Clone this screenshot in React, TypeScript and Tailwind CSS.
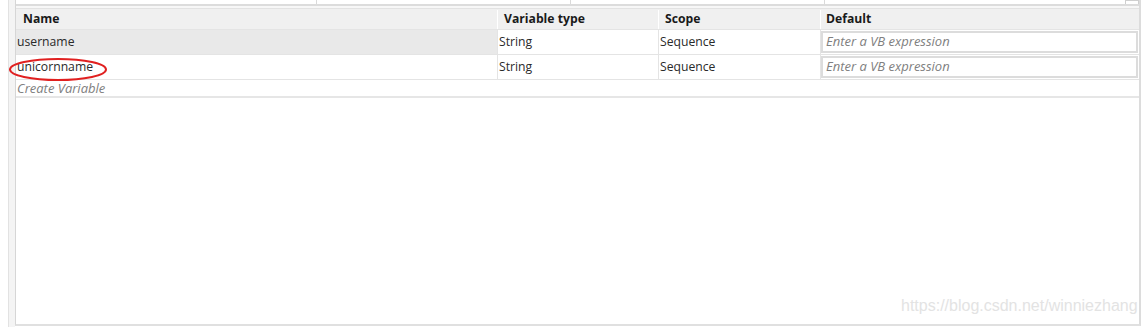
const font = { fontFamily: '"Open Sans", "Noto Sans", sans-serif' };

const rows = [
  { name: "username", type: "String", scope: "Sequence", selected: true },
  { name: "unicornname", type: "String", scope: "Sequence", selected: false },
];

function DefaultInput() {
  return (
    <div className="flex-1 h-full py-[1px] pr-[1px]">
      <div className="h-full border-2 border-[#dcdcdc] bg-white flex items-center pl-[3px] text-[13px] italic text-[#808080]">
        Enter a VB expression
      </div>
    </div>
  );
}

export default function App() {
  return (
    <div className="relative w-[1144px] h-[327px] bg-white flex overflow-hidden" style={font}>
      {/* left gutter */}
      <div className="w-[8px] shrink-0 bg-white" />
      <div className="w-[7px] shrink-0 bg-[#f4f4f4] border-l border-[#e2e2e2]" />

      {/* variables panel */}
      <div className="w-[1126px] shrink-0 flex flex-col border-l border-[#d6d6d6] border-r-2 border-r-[#dcdcdc] border-b-2 border-b-[#e0e0e0] mb-[1px]">
        {/* strip of the panel above */}
        <div className="h-[4px] flex">
          <div className="w-[301px] border-r border-[#dadada]" />
          <div className="w-[254px] border-r border-[#dadada]" />
          <div className="w-[254px] border-r border-[#dadada]" />
          <div className="flex-1" />
          <div className="w-[14px] border-x border-t border-[#cfcfcf]" />
        </div>
        <div className="h-[2px] bg-[#dcdcdc]" />
        <div className="h-[3px] bg-[#f7f7f7] border-b border-[#e2e2e2]" />

        {/* header */}
        <div className="h-[20px] flex bg-[#f0f0f0] text-[12.2px] font-bold text-[#1a1a1a] leading-none pt-[1px]">
          <div className="w-[482px] border-r border-white flex items-center pl-[7px]">Name</div>
          <div className="w-[161px] border-r border-white flex items-center pl-[6px]">Variable type</div>
          <div className="w-[162px] border-r border-white flex items-center pl-[6px]">Scope</div>
          <div className="flex-1 flex items-center pl-[5px]">Default</div>
        </div>

        {rows.map((r) => (
          <div key={r.name} className="h-[25px] flex border-t border-[#e4e4e4] text-[12.2px] text-[#2a2a2a]">
            <div
              className={`w-[482px] border-r border-[#e4e4e4] flex items-center pl-[1px] ${
                r.selected ? "bg-[#e9e9e9]" : "bg-white"
              }`}
            >
              {r.name}
            </div>
            <div className="w-[161px] border-r border-[#e4e4e4] flex items-center pl-[1px]">{r.type}</div>
            <div className="w-[162px] border-r border-[#e4e4e4] flex items-center pl-[1px]">{r.scope}</div>
            <DefaultInput />
          </div>
        ))}

        <div className="h-[16px] border-t border-[#e4e4e4] border-b-2 border-b-[#e6e6e6] flex items-center pl-[1px] text-[13px] italic text-[#808080] leading-none box-content">
          Create Variable
        </div>

        <div className="flex-1 bg-white" />
      </div>

      {/* hand-drawn annotation around the new variable */}
      <svg className="absolute left-[8px] top-[57px]" width="102" height="26" viewBox="0 0 102 26">
        <ellipse cx="50" cy="12.5" rx="48" ry="10.5" fill="none" stroke="#e02020" strokeWidth="2" />
      </svg>

      {/* watermark */}
      <div
        className="absolute left-[901px] top-[298px] text-[16px] text-[#e3e3e3] leading-none"
        style={{ fontFamily: '"Liberation Sans", Arial, sans-serif' }}
      >
        https://blog.csdn.net/winniezhang
      </div>
    </div>
  );
}
